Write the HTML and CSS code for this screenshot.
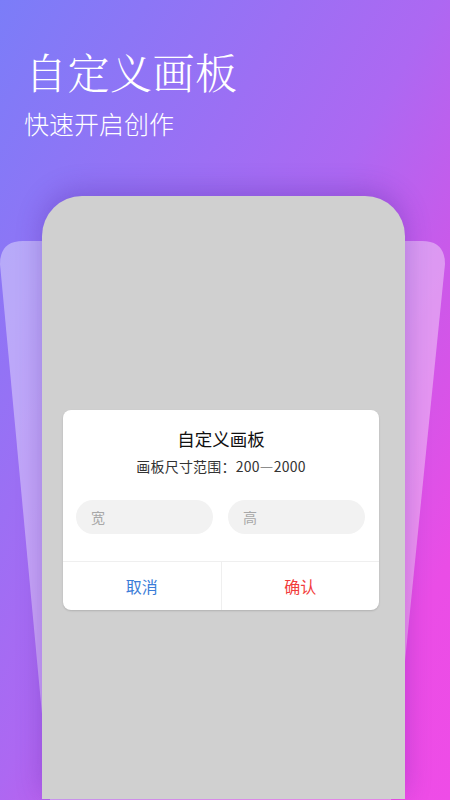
FILE: index.html
```html
<!DOCTYPE html>
<html lang="zh-CN">
<head>
<meta charset="utf-8">
<title>自定义画板</title>
<link rel="stylesheet" href="styles.css">
</head>
<body>
<div class="screen">
  <svg class="backcard" width="450" height="800" viewBox="0 0 450 800" aria-hidden="true">
    <path d="M0,264 Q0,241 23,241 H422 Q445,241 445,264 L391,800 H50 Z" fill="rgba(255,255,255,0.38)"/>
  </svg>
  <header class="head">
    <h1 class="title">自定义画板</h1>
    <p class="sub">快速开启创作</p>
  </header>
  <div class="stage">
    <div class="phone">
      <div class="dialog">
        <div class="dlg-title">自定义画板</div>
        <div class="dlg-sub">画板尺寸范围：200—2000</div>
        <div class="fields">
          <input class="field" type="text" placeholder="宽">
          <input class="field" type="text" placeholder="高">
        </div>
        <div class="actions">
          <div class="btn cancel">取消</div>
          <div class="btn ok">确认</div>
        </div>
      </div>
    </div>
  </div>
</div>
</body>
</html>
```

FILE: styles.css
```css
* { box-sizing: border-box; }
html, body { margin: 0; padding: 0; }
body {
  width: 450px;
  height: 800px;
  overflow: hidden;
  font-family: "Noto Sans CJK SC", "Noto Sans", sans-serif;
}
.screen {
  position: relative;
  width: 450px;
  height: 800px;
  overflow: hidden;
  display: flex;
  flex-direction: column;
  background: linear-gradient(to bottom right, #7b7df8 0%, #ad68f2 49%, #cc58e9 67%, #ea4de6 85%, #ef4ce7 100%);
}
.backcard {
  position: absolute;
  left: 0;
  top: 0;
}
.head {
  position: relative;
  padding: 50px 0 0 25px;
  color: #fff;
}
.title {
  margin: 0;
  font-family: "Noto Serif CJK SC", "Noto Sans CJK SC", serif;
  font-weight: 300;
  font-size: 42px;
  line-height: 42px;
  letter-spacing: 0.5px;
}
.sub {
  margin: 19px 0 0 -1px;
  font-size: 25px;
  line-height: 25px;
  font-weight: 300;
}
.stage {
  position: relative;
  flex: 1;
  padding-top: 60px;
}
.phone {
  margin-left: 42px;
  width: 363px;
  height: 603px;
  background: #d0d0d0;
  border-radius: 40px 40px 0 0;
  box-shadow: 0 -6px 26px rgba(70, 30, 150, 0.28);
  padding: 214px 0 0 21px;
}
.dialog {
  width: 316px;
  background: #fff;
  border-radius: 8px;
  box-shadow: 0 1px 2px rgba(0, 0, 0, 0.15);
  overflow: hidden;
  text-align: center;
}
.dlg-title {
  padding-top: 17px;
  font-size: 17.5px;
  line-height: 24px;
  color: #111;
  font-weight: 400;
}
.dlg-sub {
  margin-top: 5px;
  font-size: 14px;
  line-height: 20px;
  color: #333;
  letter-spacing: 0.2px;
}
.fields {
  display: flex;
  gap: 15px;
  margin-top: 24px;
  padding: 0 14px 0 13px;
}
.field {
  flex: 1;
  min-width: 0;
  height: 34px;
  border: 0;
  border-radius: 17px;
  background: #f2f2f2;
  padding: 0 0 0 15px;
  font-family: "Noto Sans CJK SC", sans-serif;
  font-size: 14px;
  color: #333;
  outline: none;
}
.field::placeholder { color: #a8a8a8; }
.actions {
  display: flex;
  margin-top: 27px;
  border-top: 1px solid #efefef;
  height: 49px;
}
.btn {
  flex: 1;
  display: flex;
  align-items: center;
  justify-content: center;
  font-size: 16px;
  font-weight: 400;
}
.cancel {
  color: #3b7dd8;
  border-right: 1px solid #efefef;
}
.ok { color: #f23c3c; }
```
